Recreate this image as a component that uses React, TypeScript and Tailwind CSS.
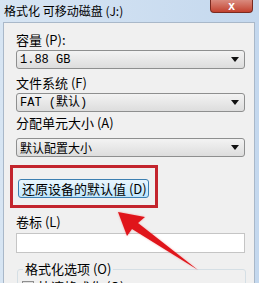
import React from "react";

const cjk = { fontFamily: '"Noto Sans CJK SC", "Noto Sans", sans-serif' };
const mono = { fontFamily: '"Liberation Mono", "Noto Sans CJK SC", monospace' };

function Combo({ text, isMono }: { text: string; isMono?: boolean }) {
  return (
    <div className="flex items-center justify-between h-[19px] w-[229px] rounded-[3px] border border-[#8e8f8f] bg-gradient-to-b from-[#f3f3f3] to-[#dddddd] pl-[3px] pr-[5px]">
      <span
        className="text-[12px] leading-none text-black"
        style={isMono ? mono : cjk}
      >
        {text}
      </span>
      <svg width="8" height="5" viewBox="0 0 8 5">
        <polygon points="0,0 8,0 4,5" fill="#111" />
      </svg>
    </div>
  );
}

function Label({ children }: { children: React.ReactNode }) {
  return (
    <div className="text-[13px] leading-[16px] text-black" style={cjk}>
      {children}
    </div>
  );
}

export default function App() {
  return (
    <div className="relative w-[259px] h-[283px] overflow-hidden bg-gradient-to-r from-[#d7e5f3] to-[#c4d8ee]">
      <div className="flex h-[22px] items-start justify-between">
        <span className="pl-[4px] pt-[3px] text-[12px] leading-[16px] text-black" style={cjk}>
          格式化 可移动磁盘 (J:)
        </span>
        <div className="mr-[6px] flex h-[13px] w-[43px] items-center justify-center rounded-b-[4px] border border-t-0 border-[#7a2a20] bg-gradient-to-b from-[#d98a7e] to-[#c2402e]">
          <span className="text-[12px] font-bold leading-none text-white" style={{ fontFamily: '"Liberation Sans", sans-serif' }}>
            x
          </span>
        </div>
      </div>

      <div className="ml-[3px] mr-[4px] h-[270px] border border-[#a9b8c9] bg-[#f0f0f0] pl-[12px] pt-[9px]">
        <Label>容量 (P):</Label>
        <div className="mt-[2px]">
          <Combo text="1.88 GB" isMono />
        </div>
        <div className="mt-[6px]">
          <Label>文件系统 (F)</Label>
        </div>
        <div className="mt-[2px]">
          <Combo text="FAT (默认)" isMono />
        </div>
        <div className="mt-[3px]">
          <Label>分配单元大小 (A)</Label>
        </div>
        <div className="mt-[7px]">
          <Combo text="默认配置大小" />
        </div>

        <div className="-ml-[6px] mt-[8px] h-[43px] w-[148px] border-[3px] border-[#c3252d] pl-[5px] pt-[11px]">
          <div className="flex h-[19px] w-[131px] items-center rounded-[3px] border border-[#3c7fb1] bg-gradient-to-b from-[#eaf6fd] to-[#bee6fd] pl-[3px]">
            <span className="text-[13px] leading-none text-black" style={cjk}>
              还原设备的默认值 (D)
            </span>
          </div>
        </div>

        <div className="mt-[6px]">
          <Label>卷标 (L)</Label>
        </div>
        <div className="mt-[3px] h-[20px] w-[229px] border border-[#c5c5c5] bg-white" />

        <div className="relative mt-[16px] ml-[1px] h-[40px] w-[229px] rounded-[3px] border border-[#d5dfe5]">
          <span
            className="absolute -top-[9px] left-[5px] bg-[#f0f0f0] px-[2px] text-[13px] leading-[16px] text-black"
            style={cjk}
          >
            格式化选项 (O)
          </span>
          <div className="mt-[10px] ml-[4px] flex items-center gap-[4px]">
            <div className="h-[12px] w-[12px] border border-[#8f8f8f] bg-gradient-to-b from-[#e0e0e0] to-white" />
            <span className="text-[13px] leading-none" style={cjk}>快速格式化 (Q)</span>
          </div>
        </div>
      </div>

      <svg
        className="absolute left-0 top-0"
        width="259"
        height="283"
        viewBox="0 0 259 283"
      >
        <defs>
          <filter id="glow" x="-20%" y="-20%" width="140%" height="140%">
            <feGaussianBlur stdDeviation="1.2" />
          </filter>
        </defs>
        <g opacity="0.5" filter="url(#glow)">
          <polygon points="118,212 145,217 138,223 198,270 132,229 127,236" fill="#f06060" />
        </g>
        <polygon points="118,212 145,217 138,223 198,270 132,229 127,236" fill="#e0151b" />
      </svg>
    </div>
  );
}
